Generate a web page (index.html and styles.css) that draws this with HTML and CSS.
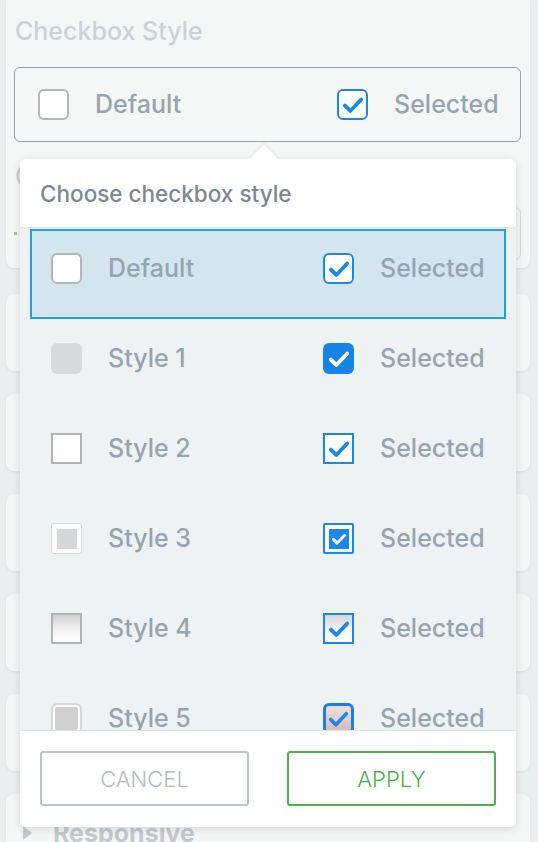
FILE: index.html
```html
<!DOCTYPE html>
<html lang="en">
<head>
    <meta charset="UTF-8">
    <meta name="viewport" content="width=device-width, initial-scale=1.0">
    <title>Checkbox Style</title>
    <link rel="stylesheet" href="styles.css">
</head>
<body>

<div class="page">
    <section class="card card-top">
        <h2 class="field-title">Checkbox Style</h2>
        <div class="picker">
            <div class="opt"><span class="cb"></span><span class="lbl">Default</span></div>
            <div class="opt">
                <span class="cb on"><svg class="tick" viewBox="0 0 24 24"><path d="M4.5 12.5l5 5L19.5 7"/></svg></span>
                <span class="lbl">Selected</span>
            </div>
        </div>
        <h2 class="field-title next">C</h2>
        <div class="color-row">
            <span class="swatch-mark"></span>
            <span class="color-input"></span>
        </div>
    </section>
    <section class="card"></section>
    <section class="card"></section>
    <section class="card"></section>
    <section class="card"></section>
    <section class="card"></section>
    <section class="card card-toggle"><span class="caret"></span>Responsive</section>
</div>

<div class="popup">
    <span class="arrow"></span>
    <div class="popup-head">Choose checkbox style</div>

    <div class="style-list">
        <div class="row active">
            <div class="opt"><span class="cb"></span><span class="lbl">Default</span></div>
            <div class="opt">
                <span class="cb on"><svg class="tick" viewBox="0 0 24 24"><path d="M4.5 12.5l5 5L19.5 7"/></svg></span>
                <span class="lbl">Selected</span>
            </div>
        </div>
        <div class="row">
            <div class="opt"><span class="cb s1"></span><span class="lbl">Style 1</span></div>
            <div class="opt">
                <span class="cb s1 on"><svg class="tick" viewBox="0 0 24 24"><path d="M4.5 12.5l5 5L19.5 7"/></svg></span>
                <span class="lbl">Selected</span>
            </div>
        </div>
        <div class="row">
            <div class="opt"><span class="cb s2"></span><span class="lbl">Style 2</span></div>
            <div class="opt">
                <span class="cb s2 on"><svg class="tick" viewBox="0 0 24 24"><path d="M4.5 12.5l5 5L19.5 7"/></svg></span>
                <span class="lbl">Selected</span>
            </div>
        </div>
        <div class="row">
            <div class="opt"><span class="cb s3"><span class="fill"></span></span><span class="lbl">Style 3</span></div>
            <div class="opt">
                <span class="cb s3 on"><span class="fill"><svg class="tick" viewBox="0 0 24 24"><path d="M4.5 12.5l5 5L19.5 7"/></svg></span></span>
                <span class="lbl">Selected</span>
            </div>
        </div>
        <div class="row">
            <div class="opt"><span class="cb s4"></span><span class="lbl">Style 4</span></div>
            <div class="opt">
                <span class="cb s4 on"><svg class="tick" viewBox="0 0 24 24"><path d="M4.5 12.5l5 5L19.5 7"/></svg></span>
                <span class="lbl">Selected</span>
            </div>
        </div>
        <div class="row">
            <div class="opt"><span class="cb s5"></span><span class="lbl">Style 5</span></div>
            <div class="opt">
                <span class="cb s5 on"><svg class="tick" viewBox="0 0 24 24"><path d="M4.5 12.5l5 5L19.5 7"/></svg></span>
                <span class="lbl">Selected</span>
            </div>
        </div>
    </div>

    <div class="popup-foot">
        <button type="button" class="btn btn-cancel">CANCEL</button>
        <button type="button" class="btn btn-apply">APPLY</button>
    </div>
</div>

</body>
</html>
```

FILE: styles.css
```css
body {
    margin: 0;
    padding: 0;
    background-color: #eaeeee;
    font-family: 'Inter', 'Liberation Sans', sans-serif;
    color: #96a4b0;
    height: 842px;
    overflow: hidden;
    position: relative;
}
.page {
    display: flex;
    flex-direction: column;
    gap: 23px;
}
.card {
    margin: 0 8px 0 6px;
    height: 77px;
    box-sizing: border-box;
    background-color: #f5f7f7;
    border-radius: 8px;
    box-shadow: 0 1px 3px rgba(0, 0, 0, 0.07);
    flex-shrink: 0;
}
.card-top {
    height: auto;
    border-radius: 0 0 8px 8px;
    padding: 16px 9px 8px 8px;
    margin-bottom: 3px;
}
.field-title {
    margin: 0 0 21px 1px;
    font-size: 25px;
    line-height: 30px;
    font-weight: 500;
    color: #cbd2d7;
}
.field-title.next {
    margin: 19px 0 16px 1px;
}
.picker {
    height: 75px;
    box-sizing: border-box;
    border: 1px solid #94a2ae;
    border-radius: 6px;
    padding-left: 23px;
    display: grid;
    grid-template-columns: 299px auto;
    align-items: center;
}
.color-row {
    height: 53px;
    display: flex;
    align-items: center;
    justify-content: space-between;
}
.swatch-mark {
    width: 3px;
    height: 3px;
    background-color: #a9c6a5;
}
.color-input {
    width: 220px;
    height: 53px;
    box-sizing: border-box;
    border: 1px solid #d6dde1;
    border-radius: 6px;
}
.card-toggle {
    display: flex;
    align-items: center;
    gap: 21px;
    padding-left: 17px;
    font-size: 25px;
    font-weight: 700;
    color: #c3c9ce;
}
.caret {
    width: 0;
    height: 0;
    border-top: 7px solid transparent;
    border-bottom: 7px solid transparent;
    border-left: 9px solid #c3c9ce;
}

/* popup */
.popup {
    position: absolute;
    left: 20px;
    top: 159px;
    width: 496px;
    height: 668px;
    background-color: #fff;
    border-radius: 6px;
    box-shadow: 0 2px 10px rgba(0, 0, 0, 0.13);
    display: flex;
    flex-direction: column;
}
.arrow {
    position: absolute;
    left: 234px;
    top: -10px;
    width: 20px;
    height: 20px;
    background-color: #fff;
    transform: rotate(45deg);
    box-shadow: -2px -2px 3px rgba(0, 0, 0, 0.05);
}
.popup-head {
    position: relative;
    height: 69px;
    box-sizing: border-box;
    padding: 0 20px;
    display: flex;
    align-items: center;
    font-size: 22.5px;
    font-weight: 500;
    color: #7b8892;
    background-color: #fff;
    border-radius: 6px 6px 0 0;
    border-bottom: 1px solid #dbe4e7;
}
.style-list {
    height: 502px;
    box-sizing: border-box;
    padding: 1px 10px 0;
    background-color: #eef2f3;
    overflow: hidden;
}
.row {
    height: 90px;
    box-sizing: border-box;
    border: 2px solid transparent;
    padding: 22px 19px 0;
    display: grid;
    grid-template-columns: 272px auto;
    align-items: start;
}
.row.active {
    background-color: #d3e5ef;
    border-color: #1fa0e6;
}
.opt {
    display: flex;
    align-items: center;
    gap: 26px;
    height: 31px;
}
.lbl {
    font-size: 25px;
    line-height: 31px;
    font-weight: 500;
    color: #96a4b0;
}

/* checkbox looks */
.cb {
    width: 31px;
    height: 31px;
    box-sizing: border-box;
    flex-shrink: 0;
    background-color: #fff;
    border: 2px solid #b5b5b5;
    border-radius: 6px;
    display: flex;
    align-items: center;
    justify-content: center;
}
.cb.on {
    border-color: #1a88e8;
}
.tick {
    width: 26px;
    height: 26px;
    fill: none;
    stroke: #1a88e8;
    stroke-width: 3.5;
    stroke-linecap: round;
    stroke-linejoin: round;
}
.cb.s1 {
    border: none;
    background-color: #d8dadb;
}
.cb.s1.on {
    background-color: #1683e7;
}
.cb.s1 .tick {
    stroke: #fff;
}
.cb.s2 {
    border-radius: 0;
    border-color: #b3b3b3;
}
.cb.s2.on {
    border-color: #1a88e8;
}
.cb.s3 {
    border: 1px solid #d9d9d9;
    border-radius: 3px;
}
.cb.s3 .fill {
    width: 20px;
    height: 20px;
    background-color: #d6d7d8;
    display: flex;
    align-items: center;
    justify-content: center;
}
.cb.s3.on {
    border: 2px solid #1a88e8;
    border-radius: 2px;
}
.cb.s3.on .fill {
    background-color: #1a88e8;
}
.cb.s3 .tick {
    width: 18px;
    height: 18px;
    stroke: #fff;
    stroke-width: 3.8;
}
.cb.s4 {
    border-radius: 0;
    border-color: #b4b4b4;
    background: linear-gradient(to bottom, #cfcfcf 0%, #f2f2f2 55%, #ffffff 100%);
}
.cb.s4.on {
    border-color: #1a88e8;
    background: linear-gradient(to bottom, #d6d6d6 0%, #f4f4f4 55%, #ffffff 100%);
}
.cb.s5 {
    border: 2px solid #d8d8d8;
    background-color: #d0d0d0;
    box-shadow: inset 0 0 0 2px #fff;
}
.cb.s5.on {
    border: 3px solid #1a80e6;
    background: linear-gradient(to bottom, #efe0e0 0%, #d8baba 100%);
    box-shadow: none;
}

/* footer */
.popup-foot {
    position: relative;
    height: 97px;
    box-sizing: border-box;
    padding: 20px 20px 21px;
    display: flex;
    gap: 38px;
    border-top: 1px solid #dbe4e7;
    border-radius: 0 0 6px 6px;
    background-color: #fff;
}
.btn {
    flex: 1;
    height: 55px;
    background-color: #fff;
    border-radius: 3px;
    font-family: 'Inter', 'Liberation Sans', sans-serif;
    font-size: 22px;
    font-weight: 300;
    cursor: pointer;
}
.btn-cancel {
    border: 2px solid #bcc4cb;
    color: #b3bcc4;
}
.btn-apply {
    border: 2px solid #4caf50;
    color: #4caf50;
}
```
